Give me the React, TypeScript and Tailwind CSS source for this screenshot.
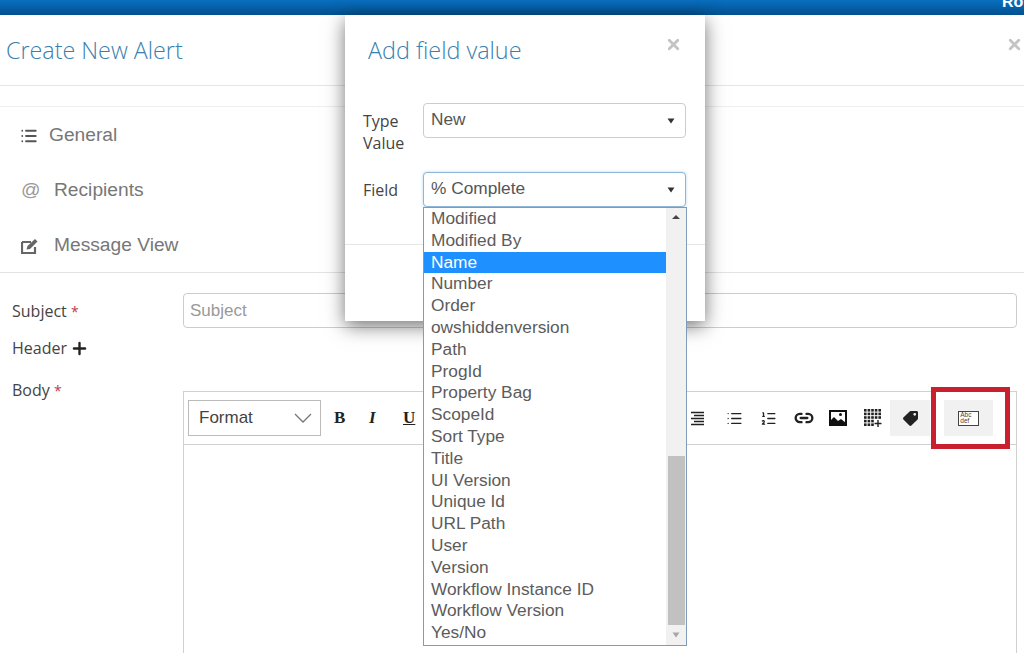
import { List, ListOrdered, Link2, Plus, X } from "lucide-react"
import { FaTag } from "react-icons/fa"

const fields = [
  "Modified",
  "Modified By",
  "Name",
  "Number",
  "Order",
  "owshiddenversion",
  "Path",
  "ProgId",
  "Property Bag",
  "ScopeId",
  "Sort Type",
  "Title",
  "UI Version",
  "Unique Id",
  "URL Path",
  "User",
  "Version",
  "Workflow Instance ID",
  "Workflow Version",
  "Yes/No",
]

function Caret({ up = false, color = "#333" }: { up?: boolean; color?: string }) {
  return (
    <svg width="8" height="6" viewBox="0 0 8 6">
      <path d={up ? "M0 5 L4 1 L8 5Z" : "M0.5 0.5 H7.5 L4 5.5Z"} fill={color} />
    </svg>
  )
}

function EditIcon() {
  return (
    <svg width="18" height="16" viewBox="0 0 18 16" className="text-[#666]">
      <path d="M1 4h9M1 4v11h13V9" fill="none" stroke="currentColor" strokeWidth="2.200" />
      <path d="M5.500 11.500l1-3.500L14 1l2.500 2.500L9 11z" fill="currentColor" />
    </svg>
  )
}

function AlignRightIcon() {
  return (
    <svg width="15" height="15" viewBox="0 0 15 15" className="text-[#222]">
      <path d="M1 1.500h13M4 4.500h10M1 7.500h13M4 10.500h10M1 13.500h13" stroke="currentColor" strokeWidth="1.500" />
    </svg>
  )
}

function PictureIcon() {
  return (
    <svg width="18" height="16" viewBox="0 0 18 16">
      <rect x="1" y="1" width="16" height="14" fill="#fff" stroke="#111" strokeWidth="2" />
      <circle cx="11.500" cy="4.500" r="1.500" fill="#111" />
      <path d="M1 14V11l4-4 4 4 3-2 5 4v2z" fill="#111" />
    </svg>
  )
}

function TableIcon() {
  const cells = []
  for (let y = 0; y < 5; y++) {
    for (let x = 0; x < 5; x++) {
      if (y > 2 && x > 2) continue
      cells.push(<rect key={`${x}-${y}`} x={x * 3.600} y={y * 3.600} width="2.600" height="2.600" fill="#222" />)
    }
  }
  return (
    <svg width="18" height="18" viewBox="0 0 18 18">
      {cells}
      <path d="M14 11v7M10.500 14.500h7" stroke="#222" strokeWidth="1.400" />
    </svg>
  )
}

function FormSelect({ value, focused = false }: { value: string; focused?: boolean }) {
  return (
    <div
      className={`flex h-[35px] w-[263px] items-start justify-between rounded-[4px] border bg-white pl-[7px] pr-[10px] pt-[4px] font-["Liberation_Sans",sans-serif] text-[17.300px] text-[#555] ${
        focused ? "border-[#8db6d8] shadow-[0_0_3px_rgba(102,175,233,0.5)]" : "border-[#ccc]"
      }`}
    >
      <span>{value}</span>
      <span className="mt-[10px]">
        <Caret />
      </span>
    </div>
  )
}

function Modal() {
  return (
    <div className='absolute left-[345px] top-[15px] h-[306px] w-[360px] bg-white font-["Open_Sans",sans-serif] shadow-[0_5px_18px_rgba(0,0,0,0.55)]'>
      <div className="flex h-[70px] items-start justify-between pl-[23px] pr-[23px] pt-[18px]">
        <h2 className="text-[23.400px] font-light leading-[34px] text-[#3a80ad]">Add field value</h2>
        <X size={17} strokeWidth={4} className="mt-[3px] text-[#c4c4c4]" />
      </div>
      <div className="flex flex-col gap-[18px] pl-[18px] pt-[18px] text-[16px] leading-[22px] text-[#444]">
        <div className="flex">
          <div className="w-[60px] pt-[7px]">
            Type
            <br />
            Value
          </div>
          <FormSelect value="New" />
        </div>
        <div className="flex">
          <div className="w-[60px] pt-[7px]">Field</div>
          <FormSelect value="% Complete" focused />
        </div>
      </div>
      <div className="mt-[37px] border-t border-[#e5e5e5]" />
    </div>
  )
}

function Dropdown() {
  return (
    <div className='absolute left-[423px] top-[207px] flex h-[439px] w-[264px] border border-[#7f9db9] bg-white font-["Liberation_Sans",sans-serif] text-[17.300px] text-[#5c5c5c]'>
      <ul className="w-[242px]">
        {fields.map((f) => (
          <li
            key={f}
            className={`h-[21.800px] pl-[7px] leading-[21.800px] ${f === "Name" ? "bg-[#1e90ff] text-white" : ""}`}
          >
            {f}
          </li>
        ))}
      </ul>
      <div className="flex w-[20px] flex-col items-center bg-[#f1f1f1]">
        <div className="flex h-[17px] items-center">
          <Caret up color="#444" />
        </div>
        <div className="mt-[231px] h-[169px] w-[17px] bg-[#c1c1c1]" />
        <div className="flex h-[20px] items-center">
          <Caret color="#a8a8a8" />
        </div>
      </div>
    </div>
  )
}

export default function App() {
  return (
    <div className='relative h-[653px] w-[1024px] overflow-hidden bg-white font-["Open_Sans",sans-serif]'>
      <div className='flex h-[15px] justify-end overflow-hidden bg-gradient-to-b from-[#0a6fc0] to-[#03508f] font-["Liberation_Sans",sans-serif] text-[16px] font-bold leading-[16px] text-white'>
        <span className="-mt-[6px] w-[22px]">Ro</span>
      </div>

      <header className="flex h-[71px] items-start justify-between border-b border-[#e5e5e5] pl-[6px] pr-[1px] pt-[18px]">
        <h1 className="text-[23.300px] font-light leading-[34px] text-[#3a80ad]">Create New Alert</h1>
        <X size={17} strokeWidth={4} className="mt-[3px] text-[#c4c4c4]" />
      </header>

      <nav className='mt-[20px] flex h-[167px] flex-col border-y border-[#eee] border-b-[#e3e3e3] font-["Liberation_Sans",sans-serif] text-[19.200px] text-[#777]'>
        <div className="flex h-[55px] items-center pl-[20px] pt-[2px]">
          <List size={18} strokeWidth={2.400} className="mr-[11px] text-[#555]" />
          General
        </div>
        <div className="flex h-[55px] items-center pl-[21px] pt-[2px]">
          <span className="mr-[16px] w-[17px] text-[#999]">@</span>
          Recipients
        </div>
        <div className="flex h-[55px] items-center pl-[21px] pt-[2px]">
          <span className="mr-[15px] flex w-[18px]">
            <EditIcon />
          </span>
          Message View
        </div>
      </nav>

      <section className="flex pl-[12px] pr-[7px] pt-[20px]">
        <div className="w-[171px] pt-[7px] text-[16px] leading-[22px] text-[#444]">
          <div>
            Subject <span className="text-sm text-[#c0394b]">*</span>
          </div>
          <div className="mt-[15px] flex items-center gap-[3px]">
            Header
            <Plus size={19} strokeWidth={3} className="text-[#222]" />
          </div>
          <div className="mt-[20px]">
            Body <span className="text-sm text-[#c0394b]">*</span>
          </div>
        </div>

        <div className="flex-1">
          <div className='h-[35px] rounded-[4px] border border-[#ccc] pl-[6px] pt-[4px] font-["Liberation_Sans",sans-serif] text-[17px] text-[#999]'>
            Subject
          </div>
          <div className="mt-[63px] h-[300px] border border-[#d1d1d1]">
            <div className='flex h-[53px] items-center border-b border-[#d1d1d1] pl-[4px] font-["Liberation_Serif",serif] text-[17px] font-bold text-[#222]'>
              <div className='flex h-[36px] w-[133px] items-center justify-between border border-[#bbb] pl-[10px] pr-[8px] font-["Liberation_Sans",sans-serif] text-[17px] font-normal text-[#444]'>
                Format
                <svg width="18" height="10" viewBox="0 0 18 10">
                  <path d="M1 1l8 8 8-8" fill="none" stroke="#777" strokeWidth="1.300" />
                </svg>
              </div>
              <span className="ml-[13px] w-[35px]">B</span>
              <span className="w-[34px] italic">I</span>
              <span className="underline">U</span>
              <span className="ml-[275px] flex w-[36px]">
                <AlignRightIcon />
              </span>
              <span className="flex w-[34px]">
                <List size={17} strokeWidth={1.800} />
              </span>
              <span className="flex w-[34px]">
                <ListOrdered size={17} strokeWidth={1.800} />
              </span>
              <span className="flex w-[35px]">
                <Link2 size={20} strokeWidth={2.800} />
              </span>
              <span className="flex w-[35px]">
                <PictureIcon />
              </span>
              <span className="flex w-[18px]">
                <TableIcon />
              </span>
              <span className="ml-[8px] flex h-[36px] w-[40px] items-center justify-center bg-[#f1f1f1]">
                <FaTag size={15} className="-scale-x-100 text-[#222]" />
              </span>
              <span className="ml-[14px] flex h-[36px] w-[49px] items-center justify-center bg-[#f1f1f1]">
                <span className='flex h-[15px] w-[21px] flex-col border border-[#444] bg-white pl-[1px] font-["Liberation_Sans",sans-serif] text-[6.500px] font-normal leading-[6.500px] text-[#444]'>
                  <span>Abc</span>
                  <span>def</span>
                </span>
              </span>
            </div>
          </div>
        </div>
      </section>

      {/* red callout drawn on top of the screenshot */}
      <div className="absolute left-[931px] top-[387px] h-[62px] w-[79px] border-[5px] border-[#c9202f]" />

      <Modal />
      <Dropdown />
    </div>
  )
}
